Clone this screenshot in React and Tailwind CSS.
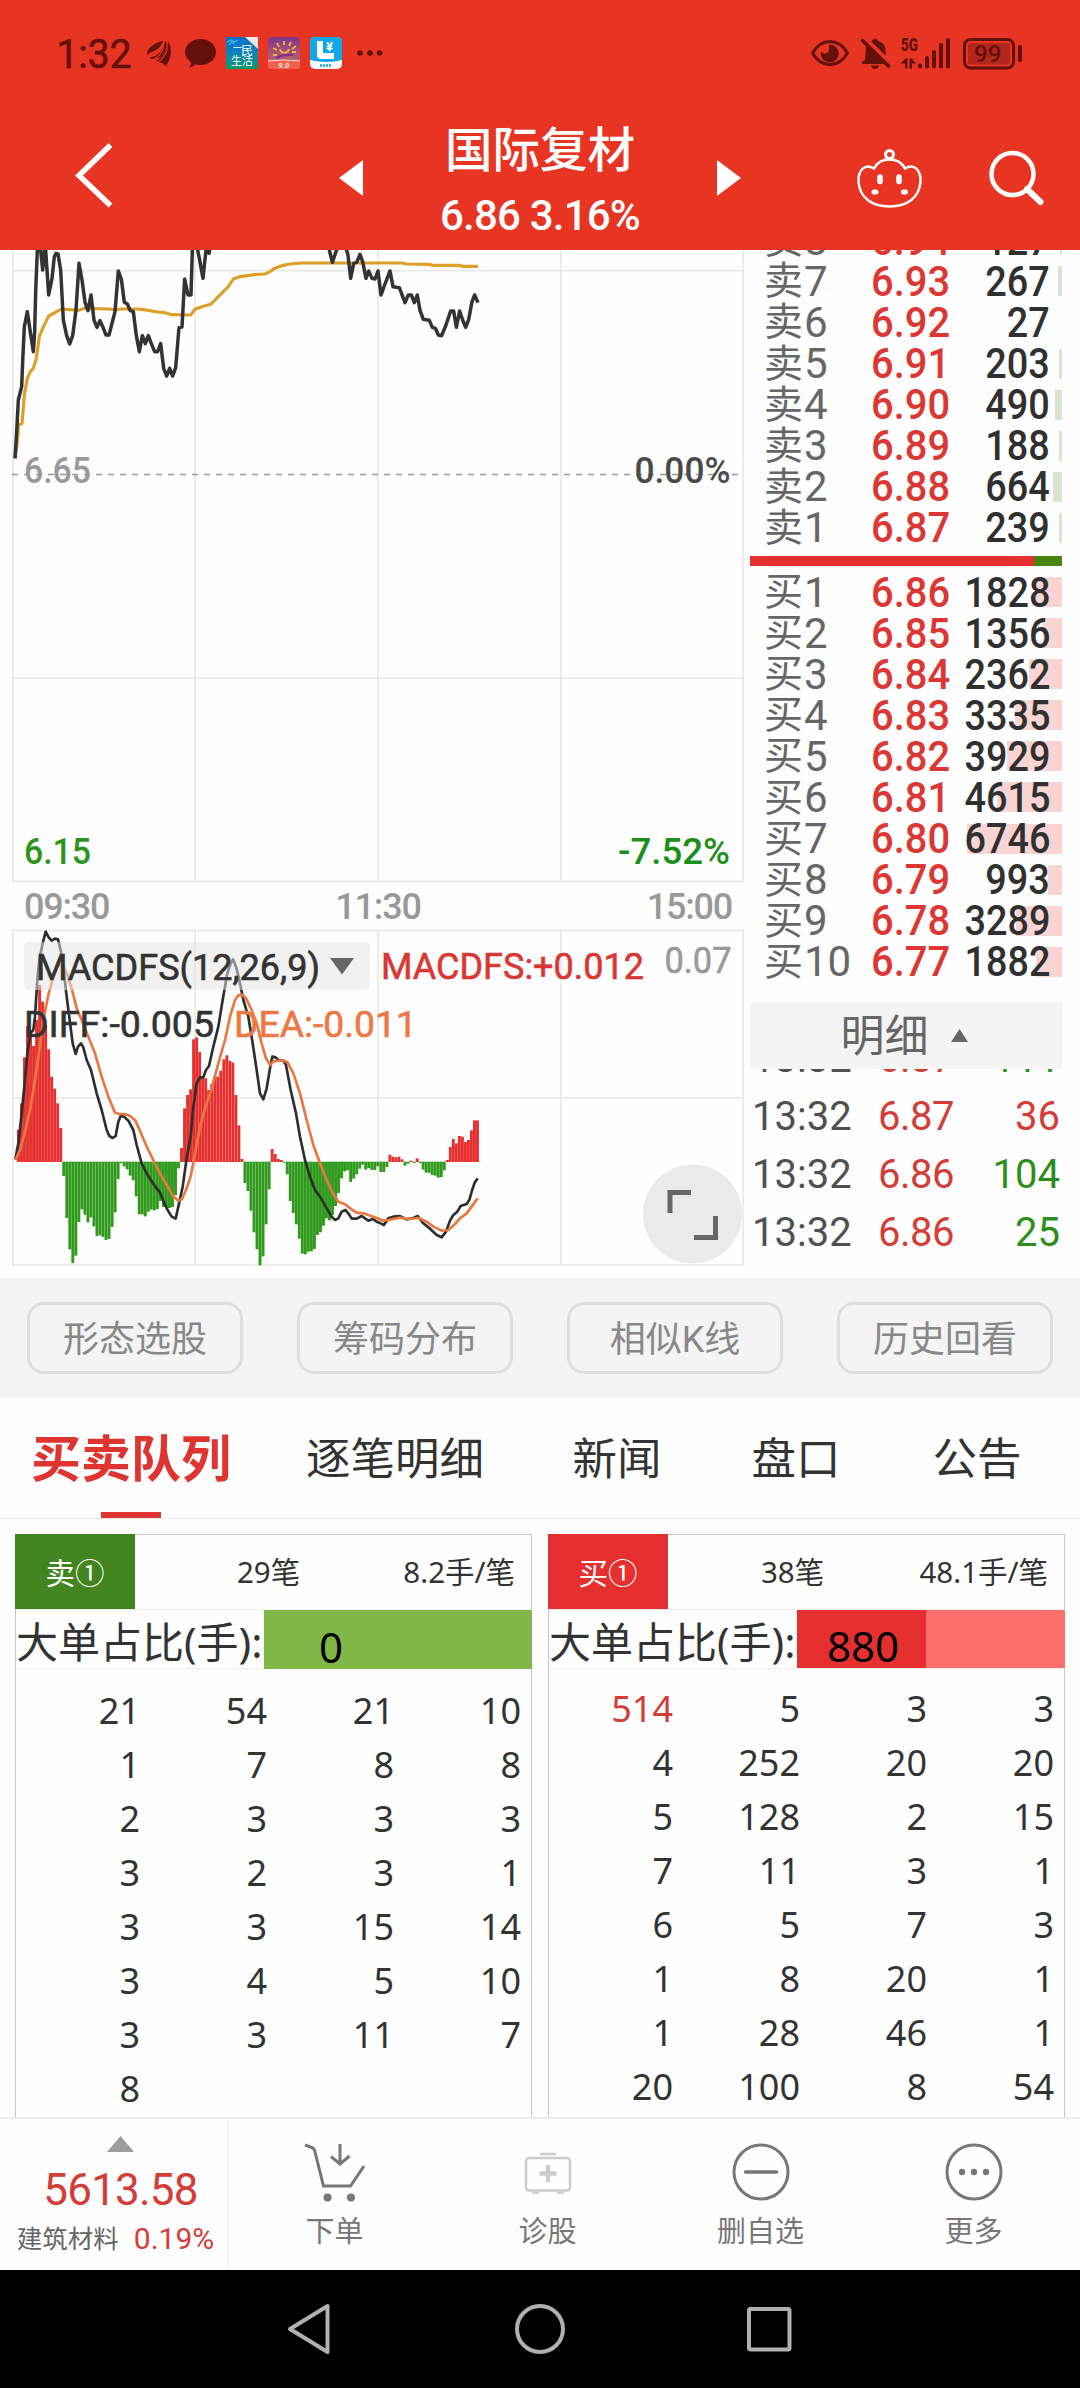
import React from "react";

const sells = [
    { n: 8, price: "6.94", vol: 127 },
    { n: 7, price: "6.93", vol: 267 },
    { n: 6, price: "6.92", vol: 27 },
    { n: 5, price: "6.91", vol: 203 },
    { n: 4, price: "6.90", vol: 490 },
    { n: 3, price: "6.89", vol: 188 },
    { n: 2, price: "6.88", vol: 664 },
    { n: 1, price: "6.87", vol: 239 },
];

const buys = [
    { n: 1, price: "6.86", vol: 1828 },
    { n: 2, price: "6.85", vol: 1356 },
    { n: 3, price: "6.84", vol: 2362 },
    { n: 4, price: "6.83", vol: 3335 },
    { n: 5, price: "6.82", vol: 3929 },
    { n: 6, price: "6.81", vol: 4615 },
    { n: 7, price: "6.80", vol: 6746 },
    { n: 8, price: "6.79", vol: 993 },
    { n: 9, price: "6.78", vol: 3289 },
    { n: 10, price: "6.77", vol: 1882 },
];

const trades = [
    { time: "13:32", price: "6.87", vol: 111, up: false },
    { time: "13:32", price: "6.87", vol: 36, up: true },
    { time: "13:32", price: "6.86", vol: 104, up: false },
    { time: "13:32", price: "6.86", vol: 25, up: false },
];

const sellQueue = [
    [21, 54, 21, 10],
    [1, 7, 8, 8],
    [2, 3, 3, 3],
    [3, 2, 3, 1],
    [3, 3, 15, 14],
    [3, 4, 5, 10],
    [3, 3, 11, 7],
    [8, "", "", ""],
];

const buyQueue = [
    [514, 5, 3, 3],
    [4, 252, 20, 20],
    [5, 128, 2, 15],
    [7, 11, 3, 1],
    [6, 5, 7, 3],
    [1, 8, 20, 1],
    [1, 28, 46, 1],
    [20, 100, 8, 54],
];

// chart series are stored in thirds of a pixel
const priceLine =
    "45,640 50,560 55,465 65,425 68,350 73,245 82,200 91,262 100,320 104,260 107,140 112,15 116,0 122,15 128,75 134,15 137,15 146,150 156,100 163,35 168,25 174,27 182,75 190,225 200,272 209,297 218,272 228,195 237,55 246,105 255,172 264,197 273,150 282,225 291,247 300,227 309,247 318,270 327,270 336,235 345,200 355,78 364,102 373,172 382,177 391,197 400,200 409,272 418,320 427,272 436,296 445,272 454,296 464,320 473,320 482,296 491,370 500,393 509,370 518,393 527,368 537,248 546,246 554,102 564,150 573,150 577,15 581,-20 590,0 598,40 609,100 618,15 622,5 627,25 632,0 640,-60 975,-40 988,15 997,52 1008,20 1016,0 1030,0 1040,15 1044,30 1052,100 1061,55 1070,52 1080,28 1088,50 1098,100 1106,78 1116,100 1125,102 1134,78 1143,150 1155,117 1170,78 1179,125 1198,128 1215,173 1225,150 1234,150 1243,173 1252,150 1260,196 1270,223 1288,226 1297,247 1306,250 1315,270 1325,272 1338,240 1352,198 1361,198 1369,247 1379,198 1388,225 1397,247 1406,224 1416,170 1424,150 1434,173";

const avgLine =
    "45,640 52,590 56,540 66,535 73,450 82,400 91,380 100,370 109,340 118,275 128,250 146,213 165,203 184,192 210,194 235,196 255,190 325,192 345,194 365,192 410,192 430,194 475,201 495,203 515,209 572,210 585,193 605,185 632,178 645,165 685,125 700,102 720,95 750,91 770,88 795,87 810,80 820,72 835,66 850,61 870,57 905,54 1205,54 1220,57 1285,58 1300,61 1375,61 1390,64 1434,64";

const ZERO = 995;
const macdBars = [
    900, 820, 682, 588, 600, 648, 570, 465, 515, 585, 658, 740, 776, 820, 894, 1037, 1163, 1257, 1298, 1276, 1175, 1137,
    1153, 1176, 1161, 1188, 1217, 1215, 1220, 1229, 1226, 1190, 1146, 1046, 998, 1008, 1017, 1036, 1050, 1098, 1152, 1152,
    1158, 1144, 1138, 1140, 1136, 1112, 1130, 1134, 1133, 1130, 1095, 1014, 954, 835, 795, 778, 628, 622, 666, 742, 745,
    780, 762, 738, 740, 722, 688, 676, 692, 698, 795, 886, 987, 1058, 1082, 1141, 1206, 1257, 1305, 1278, 1182, 1077, 957,
    972, 987, 990, 997, 1032, 1112, 1148, 1182, 1225, 1270, 1272, 1264, 1263, 1256, 1214, 1206, 1186, 1164, 1170, 1154,
    1127, 1088, 1044, 1023, 1020, 1055, 1045, 1032, 1015, 1003, 1018, 1013, 1019, 1019, 1008, 1025, 1025, 1010, 974, 980,
    982, 980, 988, 1006, 1000, 992, 998, 985, 998, 1018, 1027, 1027, 1034, 1036, 1042, 1040, 1020, 990, 951, 927, 940,
    918, 920, 936, 930, 901, 871, 871,
];

const diffLine =
    "46,988 55,940 64,860 73,770 82,670 91,610 100,600 105,560 112,450 118,390 128,340 137,305 146,322 155,332 165,326 174,328 183,365 192,430 200,500 209,570 218,640 227,672 234,650 243,640 250,652 260,690 273,720 290,790 305,840 320,900 328,918 338,924 347,918 355,875 362,858 372,860 385,872 400,900 410,945 425,1000 440,1030 460,1062 480,1088 500,1135 515,1160 527,1166 535,1130 548,1070 560,985 572,920 580,830 590,760 600,742 610,742 618,720 627,708 640,650 655,590 668,510 682,430 692,400 699,388 708,410 718,450 730,510 745,560 758,640 770,720 780,790 790,808 800,775 810,715 817,680 826,682 836,690 850,692 858,705 872,780 888,850 900,920 915,990 930,1040 945,1080 960,1100 980,1135 995,1160 1005,1170 1015,1165 1025,1145 1036,1140 1045,1150 1055,1166 1070,1166 1085,1158 1095,1165 1105,1172 1118,1167 1130,1175 1142,1180 1152,1185 1165,1165 1180,1160 1198,1158 1220,1168 1240,1164 1253,1158 1270,1180 1290,1196 1310,1215 1325,1222 1338,1205 1350,1172 1360,1155 1372,1145 1382,1128 1400,1122 1408,1110 1418,1075 1424,1058 1433,1045";

const deaLine =
    "46,990 60,960 75,905 90,840 105,750 118,660 130,570 145,495 160,440 172,410 185,400 200,430 215,475 230,535 245,570 265,620 285,670 305,740 325,800 345,848 358,852 375,852 390,858 405,870 420,902 440,950 460,990 480,1030 500,1065 520,1100 535,1112 545,1108 558,1080 572,1040 585,970 600,890 615,835 635,775 655,700 675,630 690,560 705,510 715,496 726,494 738,505 755,540 770,580 785,640 798,685 810,705 820,694 836,692 850,692 862,696 880,730 900,790 920,870 940,945 960,1000 980,1050 1000,1092 1015,1115 1035,1123 1050,1135 1070,1148 1090,1150 1120,1160 1150,1172 1165,1170 1200,1163 1225,1167 1255,1164 1280,1175 1300,1190 1325,1202 1345,1200 1365,1182 1380,1165 1400,1150 1415,1130 1433,1105";

function StatusBar() {
    return (
        <div className="h-[106px] w-full">
            <svg width="1080" height="106" viewBox="0 0 1080 106" fill="#64100b">
                <text x="56.500" y="68" fontSize="41" fontWeight="400" stroke="#64100b" strokeWidth=".6" textLength="75" lengthAdjust="spacingAndGlyphs">1:32</text>

                <path d="M147 53c2-7 8-10 16-12-2 5-4 8-9 10-3 1-5 2-7 4z" />
                <path d="M149 58c9-2 14-7 16-17 3 2 1 11-3 15-4 3-8 4-13 2z" />
                <path d="M156 61c8-4 11-10 10-20 5 6 4 15 0 25-3-3-6-4-10-5z" />
                <path d="M162 60c5-5 7-11 6-19 5 8 3 18-2 25z" />
                <path d="M163.500 41c1 8-3 15-11 19M166.500 41c2 8 0 15-8 21" fill="none" stroke="#e83423" strokeWidth="1.200" />
                <path d="M200.500 39c8.500 0 15.500 5.800 15.500 13s-7 13-15.500 13c-2 0-4-.3-5-.7-2 2-4.500 3.200-6.500 3.200 1.500-1.700 2.200-3.700 2-5.500-3.700-2.500-6-6-6-10 0-7.200 7-13 15.500-13z" />

                <defs>
                    <linearGradient id="life" x1="0" y1="0" x2="0" y2="1">
                        <stop offset="0" stopColor="#0a6fd0" />
                        <stop offset=".5" stopColor="#0b82b8" />
                        <stop offset="1" stopColor="#0f9a68" />
                    </linearGradient>
                    <linearGradient id="sun" x1="0" y1="0" x2="0" y2="1">
                        <stop offset="0" stopColor="#7d358c" />
                        <stop offset=".7" stopColor="#b8606c" />
                        <stop offset="1" stopColor="#f0604c" />
                    </linearGradient>
                </defs>
                <rect x="226" y="37" width="32" height="32" fill="url(#life)" />
                <path d="M245 37h13v12z" fill="#f0e6e6" />
                <path d="M227 42l4-2 3 2 4-2M229 45l3-4 2 3" fill="none" stroke="#3fb4f0" strokeWidth="1.200" />
                <text x="233" y="51" fontSize="9" fill="#fff">一</text>
                <text x="241" y="55" fontSize="12" fill="#fff">民</text>
                <text x="231" y="65" fontSize="11" fill="#fff">生活</text>

                <rect x="268" y="37" width="32" height="32" rx="4" fill="url(#sun)" />
                <path d="M268 62q16-3 32 0v3q0 4-4 4h-24q-4 0-4-4z" fill="#f0604c" />
                <path d="M280 49c1 5 8 5 9 0M284 41v4M277 43l2 4M291 42l-2 4M273 48l4 2M296 46l-4 3M273 55h4M292 52h4" fill="none" stroke="#f5b13c" strokeWidth="1.800" />
                <path d="M276 58q8-4 17-3" fill="none" stroke="#7a2f96" strokeWidth="2" />
                <path d="M268 61q16-2 32 0" fill="none" stroke="#ffe0d0" />
                <text x="278" y="68" fontSize="8" fontWeight="700" fontStyle="italic" fill="#ffe9dd">9.0</text>

                <rect x="310" y="37" width="32" height="32" rx="5" fill="#fff" />
                <path d="M310 60V42q0-5 5-5h22q5 0 5 5v18q-16 4-32 0z" fill="#10a8e6" />
                <path d="M317 41h6v12h11v6h-13q-4 0-4-4z" fill="#fff" />
                <text x="326" y="51" fontSize="13" fontWeight="700" fill="#fff">¥</text>
                <path d="M320 65.500h12" stroke="#10a8e6" strokeWidth="2.500" strokeDasharray="2 1" />

                <circle cx="360" cy="53" r="2.800" />
                <circle cx="370" cy="53" r="2.800" />
                <circle cx="379.500" cy="53" r="2.800" />

                <path d="M812.500 53c9-15.500 26-15.500 35 0-9 15.500-26 15.500-35 0z" fill="none" stroke="#64100b" strokeWidth="3" strokeLinejoin="round" />
                <path d="M829 44.500a9 9 0 1 1-8 7q2 3 5.500 1.800q3.500-1.500 2.500-8.800z" />

                <path d="M862 64v-2l3-2 1-13q1-5 6-6 1-2.500 3-2.500t3 2.500q8 2 7.500 11l.5 8 4 4z" />
                <path d="M871 65.500h8q-1 3.500-4 3.500t-4-3.500z" />
                <path d="M863 37l32 31" stroke="#e83423" strokeWidth="5" />
                <path d="M862.500 40.500l26 25.500" stroke="#64100b" strokeWidth="3.500" strokeLinecap="round" />

                <text x="901" y="51" fontSize="18" fontWeight="900" textLength="17" lengthAdjust="spacingAndGlyphs">5G</text>
                <path d="M900.500 63.500l5-5h2v10h-2.500v-5zM909.500 58.500h2.500l4 5h-4v5h-2.500z" />
                <g strokeWidth="4" strokeLinecap="round" stroke="#64100b">
                    <path d="M920 65.500v1M927 58v8.500M934 52v14.500M941 45v21.500M948 40v26.500" />
                </g>

                <rect x="964.500" y="39.500" width="49" height="28.500" rx="6" fill="none" stroke="#64100b" strokeWidth="3" />
                <rect x="968" y="43" width="42" height="21.500" rx="2" fill="#b3261c" />
                <rect x="1018" y="45" width="4" height="17" rx="2" />
                <text x="974" y="62" fontSize="24" fontWeight="500">99</text>
            </svg>
        </div>
    );
}

function Header() {
    return (
        <header className="h-[250px] bg-[#e83423] text-white">
            <StatusBar />
            <div className="flex h-[144px] items-start">
                <svg width="339" height="144" viewBox="0 106 339 144" fill="none" stroke="#fff" strokeWidth="5.500">
                    <path d="M110.500 145L79 175.500l31.500 30" />
                </svg>
                <svg className="mt-[54px]" width="24" height="36" viewBox="0 0 24 36" fill="#fff">
                    <path d="M24 0v36L0 18z" />
                </svg>
                <div className="flex w-[354px] flex-col items-center">
                    <div className="mt-[21px] text-[47.500px] leading-[48px] font-medium">国际复材</div>
                    <div className="mt-[19px] text-[42px] leading-[44px] font-medium tracking-[-0.800px]">6.86 3.16%</div>
                </div>
                <svg className="mt-[54px]" width="24" height="36" viewBox="0 0 24 36" fill="#fff">
                    <path d="M0 0v36l24-18z" />
                </svg>
                <svg width="339" height="144" viewBox="741 106 339 144" fill="none" stroke="#fff" strokeWidth="3">
                    <circle cx="889.500" cy="154.500" r="4" />
                    <path d="M874 168.500C880 156.500 899 156.500 905 168.500C914 163 921 170 920.500 182C919 198 907 206.500 889.500 206.500S860 198 858.500 182C858 170 865 163 874 168.500z" strokeWidth="2.500" />
                    <path d="M880 177v4.500M899 177v4.500" strokeWidth="5.500" strokeLinecap="round" />
                    <path d="M874 192h2M903.500 192h2" strokeWidth="5" strokeLinecap="round" />
                    <circle cx="1012.500" cy="174" r="21" strokeWidth="4.500" />
                    <path d="M1027 189l13.500 13" strokeWidth="6" strokeLinecap="round" />
                </svg>
            </div>
        </header>
    );
}

function PriceChart() {
    return (
        <svg width="750" height="634" viewBox="0 250 750 634" fontSize="36" fontWeight="500">
            <path d="M13 250v632M195 250v632M378 250v632M561 250v632M743 250v632M12 270.700h732M12 678.300h732M12 881.300h732" stroke="#e8e8e8" strokeWidth="1.600" fill="none" />
            <path d="M12 474.500h730" stroke="#999" strokeWidth="1.500" strokeDasharray="6 6" />
            <g transform="translate(0 245) scale(.33333)" fill="none" strokeLinejoin="round">
                <polyline points={avgLine} stroke="#dca028" strokeWidth="9.500" />
                <polyline points={priceLine} stroke="#333" strokeWidth="10.500" />
            </g>
            <text x="24" y="483" fill="#999" textLength="67" lengthAdjust="spacingAndGlyphs">6.65</text>
            <text x="634.500" y="483" fill="#4a4a4a" textLength="96" lengthAdjust="spacingAndGlyphs">0.00%</text>
            <text x="24" y="864" fill="#2e931b" textLength="67" lengthAdjust="spacingAndGlyphs">6.15</text>
            <text x="618" y="864" fill="#1b8f17" textLength="112" lengthAdjust="spacingAndGlyphs">-7.52%</text>
        </svg>
    );
}

function MacdChart() {
    return (
        <svg width="750" height="349" viewBox="0 929 750 349" fontSize="36" fontWeight="400">
            <path d="M13 930v336M195 930v336M378 930v336M561 930v336M743 930v336M12 930.500h732M12 1098h732M12 1265h732" stroke="#e8e8e8" strokeWidth="1.600" fill="none" />
            <g transform="translate(0 830) scale(.33333)" fill="none" strokeLinejoin="round">
                {macdBars.map((v, i) => (
                    <rect
                        key={i}
                        x={51 + i * 9.06}
                        y={Math.min(v, ZERO)}
                        width="8.7"
                        height={Math.abs(v - ZERO) + 1}
                        fill={v < ZERO ? "#e63030" : "#309a1c"}
                    />
                ))}
                <polyline points={diffLine} stroke="#2e2e2e" strokeWidth="8" />
                <polyline points={deaLine} stroke="#e87840" strokeWidth="8" />
            </g>
            <rect x="24" y="942" width="346" height="48" rx="5" fill="#e4e4e4" fillOpacity=".52" />
            <path d="M330 958h24l-12 16.500z" fill="#666" />
            <g strokeWidth=".6">
                <text x="36" y="980" fill="#333" stroke="#333" textLength="284" lengthAdjust="spacingAndGlyphs">MACDFS(12,26,9)</text>
                <text x="381" y="979" fill="#d83733" stroke="#d83733" textLength="263" lengthAdjust="spacingAndGlyphs">MACDFS:+0.012</text>
                <text x="664.500" y="973" fill="#999" stroke="#999" textLength="67" lengthAdjust="spacingAndGlyphs">0.07</text>
                <text x="24" y="1037" fill="#333" stroke="#333" textLength="190" lengthAdjust="spacingAndGlyphs">DIFF:-0.005</text>
                <text x="234" y="1037" fill="#ed7845" stroke="#ed7845" textLength="183" lengthAdjust="spacingAndGlyphs">DEA:-0.011</text>
            </g>
            <circle cx="692.500" cy="1214" r="49.500" fill="#e6e6e6" fillOpacity=".85" />
            <path d="M670 1213v-20.500h21M694 1237.500h21.500V1216" fill="none" stroke="#666" strokeWidth="5" />
        </svg>
    );
}

function LevelRow({ side, row }) {
    const width = row.vol < 50 ? 0 : Math.max(2, row.vol / 71);
    return (
        <div className="relative flex h-[41.100px] shrink-0 items-center pt-[2px] leading-none">
            <span
                className={side === "买" ? "absolute top-[6px] right-0 h-[30px] bg-[#f8d5d3]" : "absolute top-[6px] right-0 h-[30px] bg-[#d8e4cf]"}
                style={{ width }}
            />
            <span className="relative ml-[14px] flex w-[107px] items-center text-[#666]">
                <span className="text-[39px]">{side}</span>
                <span className="ml-[1px] text-[42px]">{row.n}</span>
            </span>
            <span className="relative w-[80px] origin-left scale-x-[.95] text-[42px] font-medium text-[#dc3733]">{row.price}</span>
            <span className="relative mr-[12px] ml-auto origin-right scale-x-[.9] text-[42px] font-medium text-[#303030]">{row.vol}</span>
        </div>
    );
}

function OrderBook() {
    return (
        <aside className="flex h-[1028px] w-[312px] flex-col">
            <div className="flex h-[298px] flex-col justify-end overflow-hidden">
                {sells.map((r) => (
                    <LevelRow key={r.n} side="卖" row={r} />
                ))}
            </div>
            <div className="mt-[8px] mb-[5px] flex h-[10px]">
                <div className="w-[284px] bg-[#e63030]" />
                <div className="flex-1 bg-[#468610]" />
            </div>
            {buys.map((r) => (
                <LevelRow key={r.n} side="买" row={r} />
            ))}
            <div className="z-10 mt-[20px] flex h-[67px] shrink-0 items-center justify-center bg-[#f4f4f4] pt-[3px] pr-[4px] text-[44px] leading-none text-[#666]">
                明细
                <svg className="-mt-[3px] ml-[22px]" width="17" height="13" viewBox="0 0 17 13" fill="#666">
                    <path d="M8.500 0L17 13H0z" />
                </svg>
            </div>
            <div className="h-[209px] overflow-hidden">
                <div className="-mt-[39px]">
                    {trades.map((t, i) => (
                        <div key={i} className="flex h-[58px] items-center pr-[2px] pl-[2px] text-[40px] leading-none">
                            <span className="w-[126px] text-[#505050]">{t.time}</span>
                            <span className="tracking-[-0.500px] text-[#d43c38]">{t.price}</span>
                            <span className={t.up ? "ml-auto text-[#d43c38]" : "ml-auto text-[#2a8f18]"}>{t.vol}</span>
                        </div>
                    ))}
                </div>
            </div>
        </aside>
    );
}

function Chips() {
    return (
        <div className="flex h-[120px] items-center justify-between bg-[#f4f4f4] px-[27px]">
            {["形态选股", "筹码分布", "相似K线", "历史回看"].map((c) => (
                <button key={c} className="h-[72px] w-[216px] rounded-[17px] border-3 border-[#dedede] pt-[3px] text-[36px] leading-none text-[#888]">
                    {c}
                </button>
            ))}
        </div>
    );
}

function Tabs() {
    return (
        <nav className="flex h-[121px] border-b border-[#e8e8e8] text-[44.500px] text-[#333]">
            <div className="flex w-[262px] flex-col items-center text-[50px] leading-[124px] font-bold text-[#e03430]">
                <span className="h-[114px]">买卖队列</span>
                <span className="h-[6px] w-[60px] bg-[#e03430]" />
            </div>
            <div className="w-[266px] text-center leading-[124px]">逐笔明细</div>
            <div className="w-[178px] text-center leading-[124px]">新闻</div>
            <div className="w-[180px] text-center leading-[124px]">盘口</div>
            <div className="w-[182px] text-center leading-[124px]">公告</div>
        </nav>
    );
}

function QueueTable({ title, count, avg, buy, big, rows }) {
    return (
        <div className="w-[517px] border border-b-0 border-[#c8c8c8] font-['Noto_Sans','Noto_Sans_CJK_SC',sans-serif]">
            <div className="-mt-px -ml-px flex h-[75px] items-center text-[29.500px] leading-none text-[#333]">
                <div className={buy ? "flex h-full w-[120px] items-center justify-center bg-[#e63030] font-['Noto_Sans_CJK_SC',sans-serif] text-white" : "flex h-full w-[120px] items-center justify-center bg-[#42841f] font-['Noto_Sans_CJK_SC',sans-serif] text-white"}>
                    {title}
                </div>
                <span className={buy ? "ml-[93px]" : "ml-[102px]"}>{count}</span>
                <span className="mr-[16px] ml-auto">{avg}</span>
            </div>
            <div className="-mr-px flex h-[60px] items-center border-y border-[#eee] text-[42px] leading-none text-[#333]">
                <div className="w-[248px] pt-[6px] whitespace-nowrap">大单占比(手):</div>
                {buy ? (
                    <div className="flex h-[58px] flex-1 bg-[#ff6f6d]">
                        <div className="h-full w-[129px] bg-[#e63030] pt-[15px] pl-[30px] text-black">{big}</div>
                    </div>
                ) : (
                    <div className="h-[59px] flex-1 bg-[#80b746] pt-[16px] pl-[55px] text-black">{big}</div>
                )}
            </div>
            <div className={buy ? "pt-[13px]" : "pt-[15px]"}>
                {rows.map((row, i) => (
                    <div key={i} className="grid h-[54px] grid-cols-[124px_127px_127px_127px] items-center text-right text-[36px] leading-none text-[#333]">
                        {row.map((v, j) => (
                            <span key={j} className={v > 500 ? "text-[#d43c38]" : ""}>{v}</span>
                        ))}
                    </div>
                ))}
            </div>
        </div>
    );
}

function BottomItem({ label, children }) {
    return (
        <div className="flex w-[213px] flex-col items-center pt-[22px] text-[29px] leading-none text-[#777]">
            <svg width="62" height="62" viewBox="-31 -31 62 62" fill="none" stroke="#777" strokeWidth="3">
                {children}
            </svg>
            <span className="mt-[15px]">{label}</span>
        </div>
    );
}

function BottomBar() {
    return (
        <footer className="relative flex h-[153px] border-t-2 border-[#ececec] bg-[#fefefe]">
            <div className="flex w-[228px] flex-col items-center border-r border-[#eee] pt-[17px] pl-[14px]">
                <svg width="27" height="16" viewBox="0 0 27 16" fill="#9c9c9c">
                    <path d="M13.500 0L27 16H0z" />
                </svg>
                <div className="mt-[16px] text-[44px] leading-[44px] tracking-[-0.800px] text-[#d43c38]">5613.58</div>
                <div className="mt-[12px] -ml-[10px] flex items-center leading-[30px]">
                    <span className="text-[25.500px] text-[#666]">建筑材料</span>
                    <span className="ml-[15px] text-[30px] text-[#d43c38]">0.19%</span>
                </div>
            </div>
            <BottomItem label="下单">
                <path d="M-30-27l8 3 1.500 2 9 36h27L29-6M5-28V-9M-4-15.500L5-8l9.500-8" />
                <circle cx="-7.500" cy="25.500" r="4" fill="#777" stroke="none" />
                <circle cx="16" cy="25.500" r="4" fill="#777" stroke="none" />
            </BottomItem>
            <BottomItem label="诊股">
                <g stroke="#ccc">
                    <rect x="-22" y="-14" width="44" height="32.500" rx="3" strokeWidth="2.500" />
                    <path d="M-8-18H8M-16 20.500h7M9 20.500h7" strokeWidth="2.500" />
                    <path d="M-8.500 1.500h17M0-7V10" strokeWidth="4.500" />
                </g>
            </BottomItem>
            <BottomItem label="删自选">
                <circle r="27" />
                <path d="M-15.500 0h31" strokeWidth="3.500" strokeLinecap="round" />
            </BottomItem>
            <BottomItem label="更多">
                <circle r="27" />
                <g fill="#777" stroke="none">
                    <circle cx="-12" r="3.200" />
                    <circle r="3.200" />
                    <circle cx="12" r="3.200" />
                </g>
            </BottomItem>
        </footer>
    );
}

function SystemNav() {
    return (
        <div className="h-[118px] bg-black">
            <svg width="1080" height="118" viewBox="0 2270 1080 118" fill="none" stroke="#b0b0b0" strokeWidth="4" strokeLinejoin="round">
                <path d="M327.500 2306v46L290 2329z" />
                <circle cx="540" cy="2329" r="23" />
                <rect x="749" y="2309" width="40.500" height="40.500" rx="1.500" />
            </svg>
        </div>
    );
}

export default function App() {
    return (
        <div className="flex h-[2388px] w-[1080px] flex-col overflow-hidden bg-[#fefefe] font-['Roboto','Noto_Sans_CJK_SC',sans-serif]">
            <Header />
            <main className="flex h-[1028px] shrink-0">
                <div className="w-[750px]">
                    <PriceChart />
                    <div className="flex h-[45px] w-[743px] items-center justify-between pr-[11px] pl-[24px] text-[36px] leading-none font-medium tracking-[-1.200px] text-[#999]">
                        <span>09:30</span>
                        <span>11:30</span>
                        <span>15:00</span>
                    </div>
                    <MacdChart />
                </div>
                <OrderBook />
            </main>
            <Chips />
            <Tabs />
            <section className="flex h-[598px] shrink-0 items-stretch justify-between overflow-hidden pt-[15px] pr-[15px] pl-[15px]">
                <QueueTable title="卖①" count="29笔" avg="8.2手/笔" big="0" rows={sellQueue} />
                <QueueTable buy title="买①" count="38笔" avg="48.1手/笔" big="880" rows={buyQueue} />
            </section>
            <BottomBar />
            <SystemNav />
        </div>
    );
}
